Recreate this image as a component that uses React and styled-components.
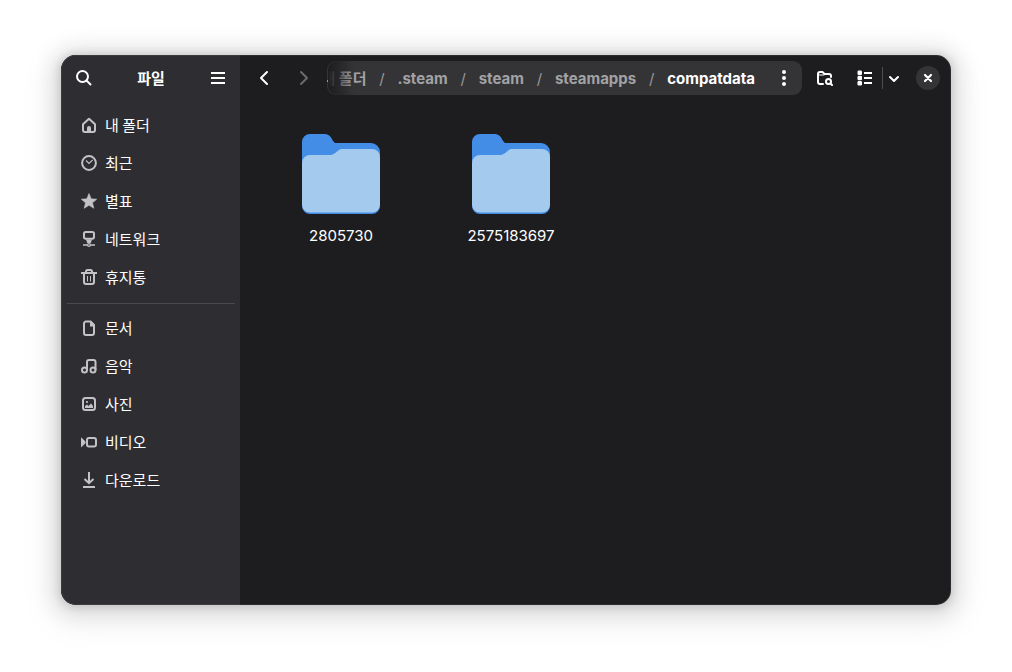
import styled, { createGlobalStyle, css } from 'styled-components'


const GlobalStyle = createGlobalStyle`
    * {
        box-sizing: border-box;
    }

    body {
        margin: 0;
        background: #ffffff;
        color: #ffffff;
        font-family: Inter, 'Noto Sans CJK KR', sans-serif;
        font-size: 15px;
        line-height: 20px;
    }

    button {
        font: inherit;
        color: inherit;
    }
`

const Desktop = styled.div`
    display: flex;
    min-height: 100vh;
    padding: 55px 61px 67px;
`

const Window = styled.div`
    position: relative;
    flex: 1;
    display: flex;
    min-width: 0;
    border-radius: 15px;
    background: #1d1d20;
    overflow: hidden;
    box-shadow:
        0 1px 8px 2px rgba(0, 0, 0, 0.13),
        0 3px 20px 10px rgba(0, 0, 0, 0.09),
        0 8px 32px 16px rgba(0, 0, 0, 0.04);

    /* thin highlight round the window edge */
    &::after {
        content: '';
        position: absolute;
        inset: 0;
        border-radius: inherit;
        box-shadow: inset 0 0 0 1px rgba(255, 255, 255, 0.07);
        pointer-events: none;
    }
`

const Sidebar = styled.aside`
    flex: 0 0 179px;
    padding: 0 5px 0 6px;
    background: #2e2e32;
    font-family: 'Noto Sans CJK KR', sans-serif;
`

const Main = styled.main`
    flex: 1;
    min-width: 0;
`

const SidebarHeader = styled.header`
    display: flex;
    align-items: center;
    justify-content: space-between;
    height: 46px;
`

const Title = styled.h1`
    margin: 0;
    font-size: 15px;
    font-weight: 700;
    line-height: 20px;
`

const Toolbar = styled.header`
    display: flex;
    align-items: center;
    gap: 6px;
    height: 46px;
    padding: 0 6px 0 7px;
`

const buttonWidths = {
    narrow: '22px',
    normal: '34px',
    wide: '36px'
}

const IconButton = styled.button`
    display: flex;
    flex: none;
    align-items: center;
    justify-content: center;
    width: ${props => buttonWidths[props.$size || 'normal']};
    height: 34px;
    padding: 0;
    border: 0;
    border-radius: 9px;
    background: none;

    &:disabled {
        color: #6b6b6d;
    }
`

const CloseCircle = styled.span`
    display: flex;
    align-items: center;
    justify-content: center;
    width: 24px;
    height: 24px;
    border-radius: 50%;
    background: #343437;
`

const SplitButton = styled.div`
    display: flex;
    align-items: center;
`

const SplitLine = styled.span`
    width: 1px;
    height: 22px;
    background: #4e4e51;
`

const PathBar = styled.nav`
    position: relative;
    flex: 1;
    display: flex;
    align-items: center;
    justify-content: flex-end;
    min-width: 0;
    height: 34px;
    border-radius: 9px;
    background: #343437;
    overflow: hidden;

    /* older crumbs fade out on the left */
    &::before {
        content: '';
        position: absolute;
        inset: 0 auto 0 1px;
        width: 26px;
        border-radius: 9px 0 0 9px;
        background: linear-gradient(to right, #1d1d20, rgba(52, 52, 55, 0));
    }
`

const Crumbs = styled.ol`
    display: flex;
    flex: none;
    margin: 0;
    padding: 2px 11px 0 0;
    list-style: none;
`

const Crumb = styled.li`
    display: flex;
    white-space: nowrap;

    & + &::before {
        content: '/';
        width: 31px;
        color: #97979a;
        text-align: center;
    }
`

const CrumbLink = styled.a`
    color: ${props => props.$current ? '#ffffff' : '#a2a2a4'};
    font-weight: 700;
    text-decoration: none;
`

const Places = styled.ul`
    margin: 0;
    padding: 5px 0 7px;
    list-style: none;

    ${props => props.$divided && css`
        border-top: 1px solid #4b4b4f;
    `}
`

const PlaceLink = styled.a`
    display: flex;
    align-items: center;
    gap: 8px;
    height: 38px;
    padding: 0 14px;
    color: #ffffff;
    text-decoration: none;

    svg {
        color: #c3c3c5;
    }
`

const FolderGrid = styled.div`
    display: grid;
    grid-template-columns: repeat(auto-fill, 170px);
    padding: 33px 16px;
`

const FolderItem = styled.button`
    display: flex;
    flex-direction: column;
    align-items: center;
    gap: 12px;
    padding: 0;
    border: 0;
    background: none;
`


function Icon({ children })
{
    return <svg
        width="16"
        height="16"
        viewBox="0 0 16 16"
        fill="none"
        stroke="currentColor"
        strokeWidth="2"
        aria-hidden="true"
    >
        {children}
    </svg>
}

const icons = {
    search: <>
        <circle cx="6.5" cy="6.5" r="5.5" />
        <path d="M10.5 10.5 14.5 14.5" strokeLinecap="round" />
    </>,
    menu: <path d="M1 3h14M1 8h14M1 13h14" />,
    back: <path d="M11 2 5 8l6 6" strokeLinecap="round" strokeLinejoin="round" />,
    forward: <path d="M5 2l6 6-6 6" strokeLinecap="round" strokeLinejoin="round" />,
    more: <g fill="currentColor" stroke="none">
        <circle cx="8" cy="2" r="2" />
        <circle cx="8" cy="8" r="2" />
        <circle cx="8" cy="14" r="2" />
    </g>,
    searchFolder: <>
        <path d="M6 14H3a2 2 0 0 1-2-2V4a2 2 0 0 1 2-2h2.500l2 2H12a2 2 0 0 1 2 2v1" strokeLinecap="round" />
        <path d="M1 5h6l1.500-1" strokeWidth="1" />
        <circle cx="11.500" cy="11.500" r="2.500" />
        <path d="M13.500 13.500 15 15" strokeLinecap="round" />
    </>,
    list: <>
        <g fill="currentColor" stroke="none">
            <rect x=".5" y=".5" width="4.500" height="4.500" rx="1.200" />
            <rect x=".5" y="5.750" width="4.500" height="4.500" rx="1.200" />
            <rect x=".5" y="11" width="4.500" height="4.500" rx="1.200" />
        </g>
        <path d="M7 3h8M7 8h8M7 13h8" />
    </>,
    down: <path d="M4 7l4 4 4-4" strokeLinecap="round" strokeLinejoin="round" />,
    close: <path d="M5 5l6 6M11 5l-6 6" strokeWidth="2.200" strokeLinecap="round" />,
    home: <>
        <path d="M2 7.300 8 1.700l6 5.600V13a2 2 0 0 1-2 2H4a2 2 0 0 1-2-2z" strokeLinejoin="round" />
        <path d="M6 15v-4a2 2 0 0 1 4 0v4z" fill="currentColor" stroke="none" />
    </>,
    recent: <>
        <circle cx="8" cy="8" r="6.900" />
        <path d="M5 5.500 8 8.500l3.700-3.700" strokeWidth="1.200" />
    </>,
    star: <path
        d="M8 .5 10.200 5.800l5.500.4-4.200 3.600L12.800 15.300 8 12.300l-4.800 3L4.500 9.800.3 6.200l5.500-.4z"
        fill="currentColor"
        strokeWidth=".6"
        strokeLinejoin="round"
    />,
    network: <>
        <rect x="3" y="1" width="10" height="6.800" rx="1.800" />
        <path d="M5 8.500h6L9.800 12H6.200z" fill="currentColor" stroke="none" />
        <path d="M2 14h4.500M9.500 14H14" strokeWidth="1.600" />
        <circle cx="8" cy="14" r="1.400" strokeWidth="1.200" />
    </>,
    trash: <>
        <path d="M0 4h16" />
        <path d="M5 4V2.500A1.500 1.500 0 0 1 6.500 1h3A1.500 1.500 0 0 1 11 2.500V4" />
        <path d="M3 4v9a2 2 0 0 0 2 2h6a2 2 0 0 0 2-2V4" />
        <path d="M6.500 7v5.500M9.500 7v5.500" strokeWidth="1" />
    </>,
    document: <>
        <path d="M9.500 1.500H5a2 2 0 0 0-2 2V13a2 2 0 0 0 2 2h6a2 2 0 0 0 2-2V5z" strokeLinejoin="round" />
        <path d="M9 1h1l4 4v1.500H9z" fill="currentColor" stroke="none" />
    </>,
    music: <>
        <circle cx="3.500" cy="12" r="2.500" />
        <circle cx="12" cy="12" r="2.500" />
        <path d="M6 12V4a2 2 0 0 1 2-2h4.500a2 2 0 0 1 2 2v8" />
    </>,
    picture: <>
        <rect x="2" y="2" width="12" height="12" rx="2.500" />
        <circle cx="6" cy="6" r="1.100" fill="currentColor" stroke="none" />
        <path d="M4 12v-2l2-1.500 1.500 1.500L10 7.500l2 2.500v2z" fill="currentColor" stroke="none" />
    </>,
    video: <>
        <rect x="6" y="4" width="9" height="8.500" rx="2" />
        <path d="M0 3.200 4.500 7.500v1.800L0 13.500z" fill="currentColor" stroke="none" />
    </>,
    download: <>
        <path d="M8 0v11M3.500 7 8 11.200 12.500 7" />
        <path d="M2 15h12" />
    </>
}

function FolderIcon()
{
    return <svg width="78" height="80" viewBox="0 0 78 80" aria-hidden="true">
        <path
            d="M8 0H22C27 0 28.500 2.500 30.500 6S33 9 36 9H69A9 9 0 0 1 78 18V72A8 8 0 0 1 70 80H8A8 8 0 0 1 0 72V8A8 8 0 0 1 8 0Z"
            fill="#438de6"
        />
        <path
            d="M8 21H27C31 21 32.500 19.500 35 17.500S38 15 41 15H70A8 8 0 0 1 78 23V70.500A8 8 0 0 1 70 78.500H8A8 8 0 0 1 0 70.500V29A8 8 0 0 1 8 21Z"
            fill="#a4caee"
        />
    </svg>
}

const places = [
    { icon: 'home', label: '내 폴더' },
    { icon: 'recent', label: '최근' },
    { icon: 'star', label: '별표' },
    { icon: 'network', label: '네트워크' },
    { icon: 'trash', label: '휴지통' }
]

const bookmarks = [
    { icon: 'document', label: '문서' },
    { icon: 'music', label: '음악' },
    { icon: 'picture', label: '사진' },
    { icon: 'video', label: '비디오' },
    { icon: 'download', label: '다운로드' }
]

const path = ['내 폴더', '.steam', 'steam', 'steamapps', 'compatdata']

const folders = ['2805730', '2575183697']

function PlaceList({ items, divided })
{
    return <Places $divided={divided}>
        {items.map(item => (
            <li key={item.label}>
                <PlaceLink href="#">
                    <Icon>{icons[item.icon]}</Icon>
                    {item.label}
                </PlaceLink>
            </li>
        ))}
    </Places>
}

export default function App()
{
    return <>
        <GlobalStyle />
        <Desktop>
            <Window>
                <Sidebar>
                    <SidebarHeader>
                        <IconButton aria-label="검색"><Icon>{icons.search}</Icon></IconButton>
                        <Title>파일</Title>
                        <IconButton aria-label="주 메뉴"><Icon>{icons.menu}</Icon></IconButton>
                    </SidebarHeader>
                    <PlaceList items={places} />
                    <PlaceList items={bookmarks} divided />
                </Sidebar>

                <Main>
                    <Toolbar>
                        <IconButton aria-label="뒤로"><Icon>{icons.back}</Icon></IconButton>
                        <IconButton aria-label="앞으로" disabled><Icon>{icons.forward}</Icon></IconButton>
                        <PathBar aria-label="경로">
                            <Crumbs>
                                {path.map((name, i) => (
                                    <Crumb key={name}>
                                        <CrumbLink href="#" $current={i === path.length - 1}>{name}</CrumbLink>
                                    </Crumb>
                                ))}
                            </Crumbs>
                            <IconButton aria-label="폴더 메뉴" $size="wide"><Icon>{icons.more}</Icon></IconButton>
                        </PathBar>
                        <IconButton aria-label="폴더 검색"><Icon>{icons.searchFolder}</Icon></IconButton>
                        <SplitButton>
                            <IconButton aria-label="목록 보기"><Icon>{icons.list}</Icon></IconButton>
                            <SplitLine />
                            <IconButton aria-label="보기 옵션" $size="narrow"><Icon>{icons.down}</Icon></IconButton>
                        </SplitButton>
                        <IconButton aria-label="닫기">
                            <CloseCircle><Icon>{icons.close}</Icon></CloseCircle>
                        </IconButton>
                    </Toolbar>

                    <FolderGrid>
                        {folders.map(name => (
                            <FolderItem key={name}>
                                <FolderIcon />
                                {name}
                            </FolderItem>
                        ))}
                    </FolderGrid>
                </Main>
            </Window>
        </Desktop>
    </>
}
